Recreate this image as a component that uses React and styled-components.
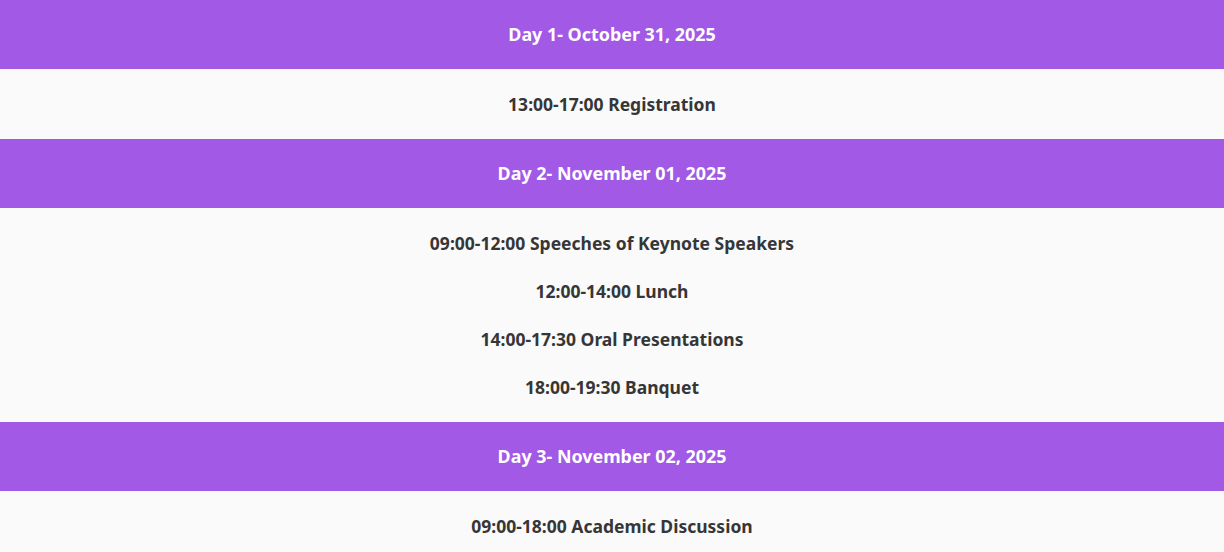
import React from "react";
import styled, { createGlobalStyle } from "styled-components";

const GlobalStyle = createGlobalStyle`
  body {
    margin: 0;
    background: #fafafa;
    font-family: "Noto Sans", "Open Sans", sans-serif;
  }
`;

const Schedule = styled.div`
  display: flex;
  flex-direction: column;
`;

const DayHeader = styled.div`
  background: #a259e6;
  color: #ffffff;
  font-weight: 700;
  font-size: 17.9px;
  line-height: 27px;
  padding: 21px 0;
  text-align: center;
`;

const DayBody = styled.div`
  background: #fafafa;
  padding: 23px 0;
  display: flex;
  flex-direction: column;
  gap: 24px;
`;

const Item = styled.div`
  color: #363636;
  font-weight: 700;
  font-size: 17.5px;
  line-height: 24px;
  text-align: center;
`;

const days = [
  { title: "Day 1- October 31, 2025", items: ["13:00-17:00 Registration"] },
  {
    title: "Day 2- November 01, 2025",
    items: [
      "09:00-12:00 Speeches of Keynote Speakers",
      "12:00-14:00 Lunch",
      "14:00-17:30 Oral Presentations",
      "18:00-19:30 Banquet",
    ],
  },
  { title: "Day 3- November 02, 2025", items: ["09:00-18:00 Academic Discussion"] },
];

export default function App() {
  return (
    <>
      <GlobalStyle />
      <Schedule>
        {days.map((day) => (
          <React.Fragment key={day.title}>
            <DayHeader>{day.title}</DayHeader>
            <DayBody>
              {day.items.map((item) => (
                <Item key={item}>{item}</Item>
              ))}
            </DayBody>
          </React.Fragment>
        ))}
      </Schedule>
    </>
  );
}
